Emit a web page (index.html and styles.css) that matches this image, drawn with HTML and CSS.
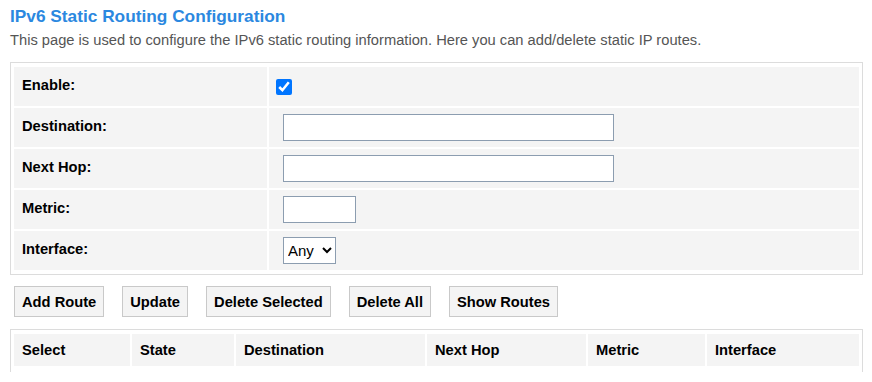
FILE: index.html
```html
<!DOCTYPE html>
<html lang="en">
<head>
  <meta charset="UTF-8">
  <title>IPv6 Static Routing</title>
  <link rel="stylesheet" href="styles.css">
</head>
<body>
  <h1>IPv6 Static Routing Configuration</h1>
  <p class="intro">This page is used to configure the IPv6 static routing information. Here you can add/delete static IP routes.</p>

  <form id="routeForm">
    <table class="cfg-table">
      <tr>
        <td class="cfg-label">Enable:</td>
        <td class="cfg-value"><input type="checkbox" name="enable" checked></td>
      </tr>
      <tr>
        <td class="cfg-label">Destination:</td>
        <td class="cfg-value"><input class="text-input" type="text" name="dest"></td>
      </tr>
      <tr>
        <td class="cfg-label">Next Hop:</td>
        <td class="cfg-value"><input class="text-input" type="text" name="nexthop"></td>
      </tr>
      <tr>
        <td class="cfg-label">Metric:</td>
        <td class="cfg-value"><input class="text-input short" type="text" name="metric"></td>
      </tr>
      <tr>
        <td class="cfg-label">Interface:</td>
        <td class="cfg-value">
          <select name="iface">
            <option>Any</option>
          </select>
        </td>
      </tr>
    </table>

    <div class="btn-row">
      <button type="button">Add Route</button>
      <button type="button">Update</button>
      <button type="button">Delete Selected</button>
      <button type="button">Delete All</button>
      <button type="button">Show Routes</button>
    </div>
  </form>

  <table class="route-table">
    <tr>
      <th class="col-select">Select</th>
      <th class="col-state">State</th>
      <th class="col-dest">Destination</th>
      <th class="col-hop">Next Hop</th>
      <th class="col-metric">Metric</th>
      <th>Interface</th>
    </tr>
  </table>
</body>
</html>
```

FILE: styles.css
```css
body {
  margin: 0;
  padding: 6px 9px 0 10px;
  font-family: "Liberation Sans", Arial, sans-serif;
  font-size: 14.7px;
  color: #000;
  background: #fff;
}

h1 {
  font-size: 17.28px;
  color: #2b88e0;
  margin: 0 0 5px 0;
}

.intro {
  margin: 0 0 14px 0;
  color: #555;
}

/* config table */
.cfg-table {
  width: 100%;
  border: 1px solid #dcdcdc;
  padding: 2px 1px;
  border-spacing: 2px;
}

.cfg-table td {
  height: 39px;
  padding: 0 8px;
  background: #f4f4f4;
}

td.cfg-label {
  width: 237px;
  height: 35px;
  padding-bottom: 4px;
  font-weight: bold;
}

td.cfg-value {
  padding-left: 7px;
}

.cfg-value input[type="checkbox"] {
  width: 16px;
  height: 16px;
  margin: 0;
  vertical-align: middle;
}

.text-input {
  box-sizing: border-box;
  width: 331px;
  height: 27px;
  margin-left: 7px;
  padding: 2px 4px;
  border: 1px solid #8c9db0;
  font-size: 14.4px;
  vertical-align: middle;
}

.text-input.short {
  width: 73px;
}

select {
  box-sizing: border-box;
  width: 53px;
  height: 27px;
  margin-left: 7px;
  border: 1px solid #8c9db0;
  border-radius: 0;
  background: #fff;
  color: #000;
  font-family: inherit;
  font-size: 15px;
  vertical-align: middle;
}

/* buttons */
.btn-row {
  display: flex;
  gap: 18px;
  margin: 11px 0 12px 4px;
}

button {
  height: 31px;
  padding: 0 7px;
  font-family: inherit;
  font-size: 14.7px;
  font-weight: bold;
  color: #000;
  background: #f4f4f4;
  border: 1px solid #c9c9c9;
}

/* route list */
.route-table {
  width: 100%;
  table-layout: fixed;
  border: 1px solid #dcdcdc;
  border-bottom: 0;
  padding: 2px 1px 4px;
  border-spacing: 2px;
}

.route-table th {
  height: 32px;
  padding: 0 8px;
  text-align: left;
  background: #f4f4f4;
}

.col-select { width: 100px; }
.col-state { width: 86px; }
.col-dest { width: 173px; }
.col-hop { width: 143px; }
.col-metric { width: 101px; }
```
